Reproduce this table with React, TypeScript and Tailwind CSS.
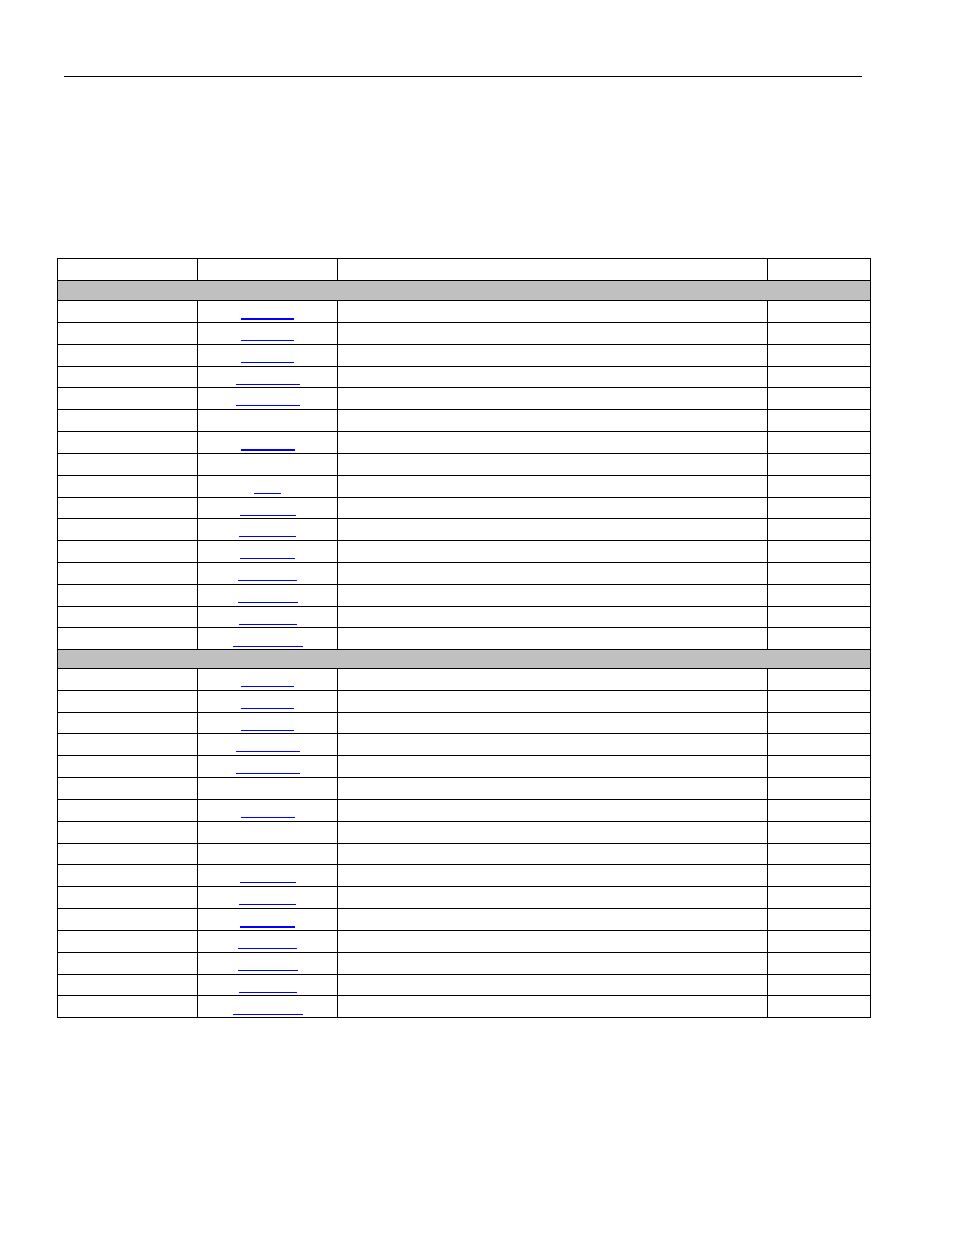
const cols = ["w-[140px]", "w-[140px]", "w-[430px]", "w-[103px]"];

type Row = { h: string; link?: { w: string; thick?: boolean; low?: boolean } };

// row heights follow the ruled lines of the printed page
const sectionOne: Row[] = [
  { h: "h-[22px]", link: { w: "w-[53px]", thick: true } },
  { h: "h-[22px]", link: { w: "w-[53px]" } },
  { h: "h-[22px]", link: { w: "w-[53px]" } },
  { h: "h-[21px]", link: { w: "w-[64px]" } },
  { h: "h-[22px]", link: { w: "w-[64px]" } },
  { h: "h-[22px]" },
  { h: "h-[22px]", link: { w: "w-[54px]", thick: true } },
  { h: "h-[22px]" },
  { h: "h-[22px]", link: { w: "w-[27px]" } },
  { h: "h-[21px]", link: { w: "w-[56px]" } },
  { h: "h-[22px]", link: { w: "w-[57px]" } },
  { h: "h-[22px]", link: { w: "w-[55px]" } },
  { h: "h-[22px]", link: { w: "w-[59px]" } },
  { h: "h-[22px]", link: { w: "w-[60px]" } },
  { h: "h-[21px]", link: { w: "w-[58px]" } },
  { h: "h-[22px]", link: { w: "w-[70px]", low: true } },
];

const sectionTwo: Row[] = [
  { h: "h-[22px]", link: { w: "w-[53px]" } },
  { h: "h-[22px]", link: { w: "w-[53px]" } },
  { h: "h-[21px]", link: { w: "w-[53px]" } },
  { h: "h-[22px]", link: { w: "w-[64px]" } },
  { h: "h-[22px]", link: { w: "w-[64px]" } },
  { h: "h-[22px]" },
  { h: "h-[22px]", link: { w: "w-[54px]" } },
  { h: "h-[22px]" },
  { h: "h-[21px]" },
  { h: "h-[22px]", link: { w: "w-[56px]" } },
  { h: "h-[22px]", link: { w: "w-[57px]" } },
  { h: "h-[22px]", link: { w: "w-[55px]", thick: true } },
  { h: "h-[22px]", link: { w: "w-[59px]" } },
  { h: "h-[22px]", link: { w: "w-[60px]" } },
  { h: "h-[21px]", link: { w: "w-[58px]" } },
  { h: "h-[22px]", link: { w: "w-[70px]", low: true } },
];

function BodyRow({ row }: { row: Row }) {
  return (
    <div className={`flex box-border border-b border-black ${row.h}`}>
      {cols.map((c, i) => (
        <div key={i} className={`${c} box-border h-full border-r border-black flex justify-center items-start`}>
          {i === 1 && row.link ? (
            <a
              href="#"
              className={`block ${row.link.w} ${row.link.thick ? "h-[2px]" : "h-px"} ${row.link.low ? "mt-[18px]" : "mt-[17px]"} bg-[#0000ff]`}
            />
          ) : null}
        </div>
      ))}
    </div>
  );
}

function GrayRow({ h }: { h: string }) {
  return <div className={`box-border border-b border-r border-black bg-[#c0c0c0] ${h}`} />;
}

export default function App() {
  return (
    <div className="min-h-[1235px] w-[954px] bg-white font-['Liberation_Sans',Arial,sans-serif]">
      <div className="pt-[76px] pl-[64px]">
        <div className="h-px w-[798px] bg-black" />
      </div>

      <div className="ml-[57px] mt-[181px] w-[814px] border-l border-t border-black">
        <BodyRow row={{ h: "h-[22px]" }} />
        <GrayRow h="h-[20px]" />
        {sectionOne.map((r, i) => (
          <BodyRow key={`a${i}`} row={r} />
        ))}
        <GrayRow h="h-[19px]" />
        {sectionTwo.map((r, i) => (
          <BodyRow key={`b${i}`} row={r} />
        ))}
      </div>
    </div>
  );
}
